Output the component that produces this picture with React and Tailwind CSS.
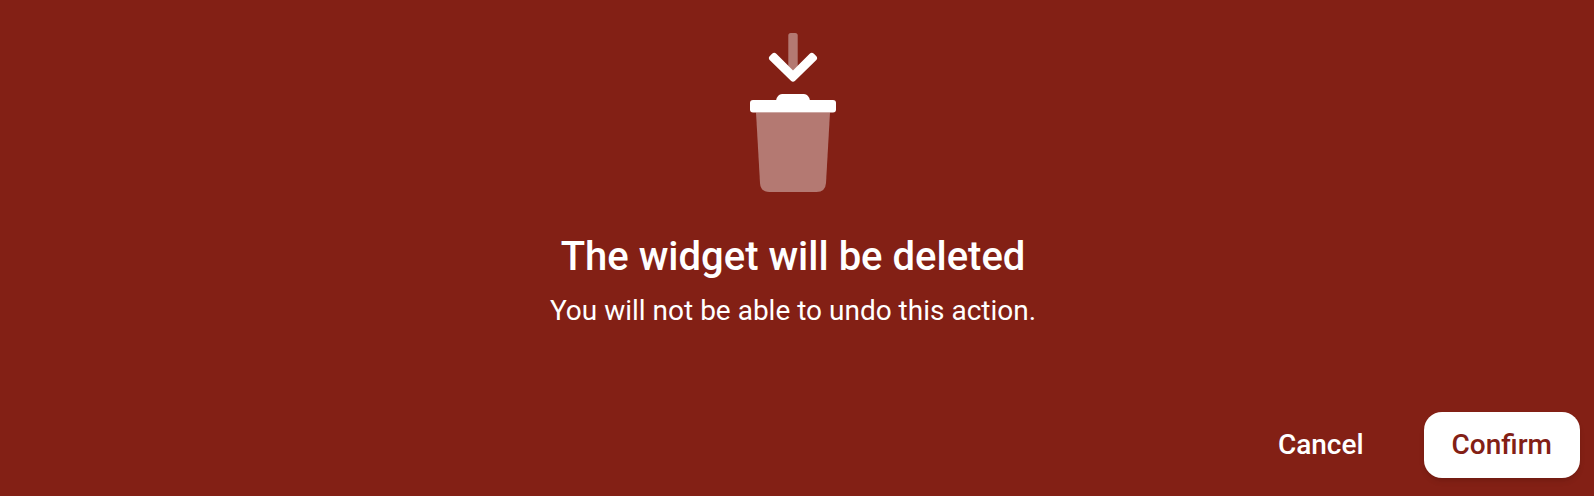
function TrashIcon() {
  return (
    <svg width="86" height="159" viewBox="0 0 86 159" fill="white" aria-hidden="true">
      <path opacity="0.4" d="M38.3 2.5 Q38.3 0 40.8 0 H45.2 Q47.7 0 47.7 2.5 V33 L43 37.7 L38.3 33 Z" />
      <path
        d="M24.2 22.9 L22 25.1 L43 45.7 L64 25.1 L61.8 22.9 L43 41.6 Z"
        stroke="white"
        strokeWidth="6"
        strokeLinejoin="round"
      />
      <path d="M26 67.5 Q27.5 61 32 61 H54 Q58.5 61 60 67.5 Z" />
      <rect x="0" y="67" width="86" height="12.4" rx="3" />
      <path opacity="0.4" d="M6 79.4 H80 L76 150 Q75.4 159 66.5 159 H19.5 Q10.6 159 10 150 Z" />
    </svg>
  );
}

function App() {
  return (
    <div className="min-h-screen flex flex-col bg-[#832015] pt-[33px] pb-[18px] font-['Roboto',sans-serif] text-white">
      <div className="flex flex-col items-center pr-2 text-center">
        <TrashIcon />
        <h1 className="mt-[41px] text-[40px] leading-[48px] font-medium">The widget will be deleted</h1>
        <p className="mt-[10px] text-[28px] leading-10">You will not be able to undo this action.</p>
      </div>
      <div className="mt-auto flex justify-end gap-8 pr-[14px]">
        <button type="button" className="h-[66px] px-7 rounded-[18px] text-[28px] font-medium">
          Cancel
        </button>
        <button type="button" className="h-[66px] px-7 rounded-[18px] bg-white text-[28px] font-medium text-[#832015] shadow-md">
          Confirm
        </button>
      </div>
    </div>
  );
}

export default App;
